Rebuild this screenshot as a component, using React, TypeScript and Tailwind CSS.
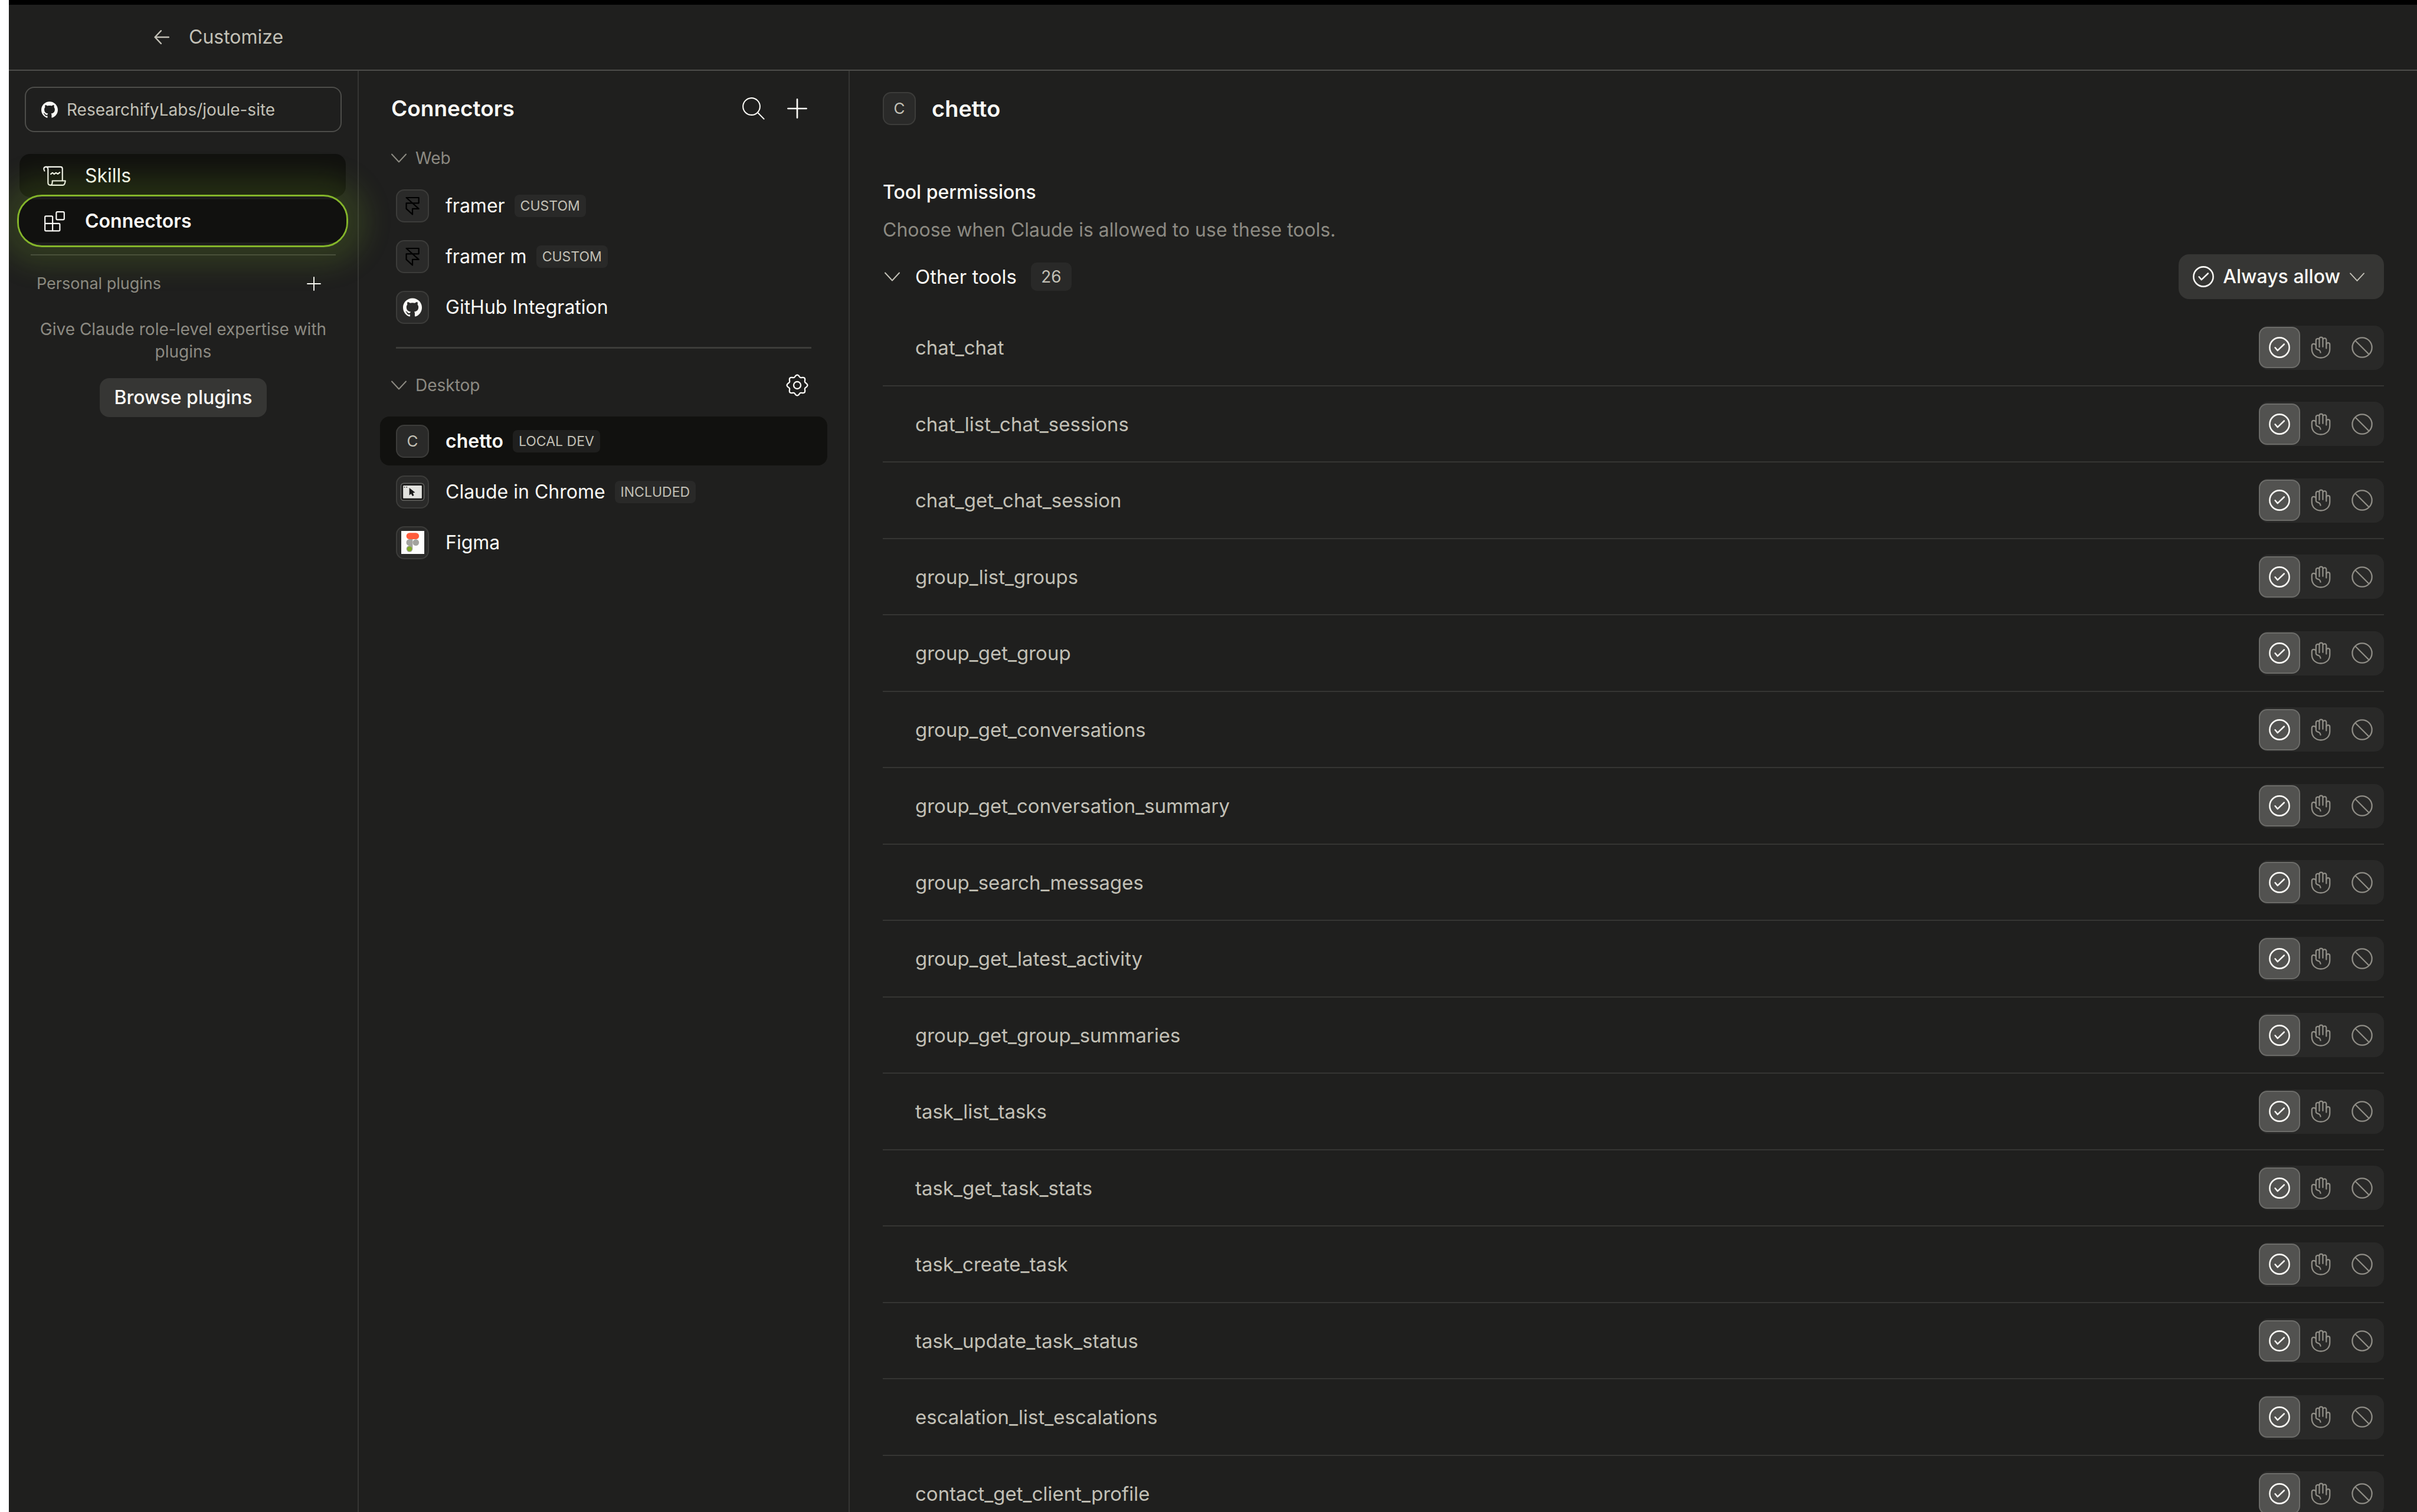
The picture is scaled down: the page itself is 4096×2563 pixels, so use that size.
import React, { useState } from 'react';

type IconProps = { className?: string };

const GITHUB_MARK =
  'M12 .297c-6.63 0-12 5.373-12 12 0 5.303 3.438 9.8 8.205 11.385.6.113.82-.258.82-.577 0-.285-.01-1.04-.015-2.04-3.338.724-4.042-1.61-4.042-1.61C4.422 18.07 3.633 17.7 3.633 17.7c-1.087-.744.084-.729.084-.729 1.205.084 1.838 1.236 1.838 1.236 1.07 1.835 2.809 1.305 3.495.998.108-.776.417-1.305.76-1.605-2.665-.3-5.466-1.332-5.466-5.93 0-1.31.465-2.38 1.235-3.22-.135-.303-.54-1.523.105-3.176 0 0 1.005-.322 3.3 1.23.96-.267 1.98-.399 3-.405 1.02.006 2.04.138 3 .405 2.28-1.552 3.285-1.23 3.285-1.23.645 1.653.24 2.873.12 3.176.765.84 1.23 1.91 1.23 3.22 0 4.61-2.805 5.625-5.475 5.92.42.36.81 1.096.81 2.22 0 1.606-.015 2.896-.015 3.286 0 .315.21.69.825.57C20.565 22.092 24 17.592 24 12.297c0-6.627-5.373-12-12-12';

function GithubIcon({ className }: IconProps) {
  return (
    <svg viewBox="0 0 24 24" fill="currentColor" className={className} aria-hidden="true">
      <path d={GITHUB_MARK} />
    </svg>
  );
}

function ArrowLeftIcon({ className }: IconProps) {
  return (
    <svg viewBox="0 0 24 24" fill="none" stroke="currentColor" strokeWidth="2.200" strokeLinecap="round" strokeLinejoin="round" className={className} aria-hidden="true">
      <path d="M23 12H1.5M11 2 1.5 12l9.500 10" />
    </svg>
  );
}

function PlusIcon({ className }: IconProps) {
  return (
    <svg viewBox="0 0 24 24" fill="none" stroke="currentColor" strokeWidth="1.900" strokeLinecap="round" className={className} aria-hidden="true">
      <path d="M12 1v22M1 12h22" />
    </svg>
  );
}

function SearchIcon({ className }: IconProps) {
  return (
    <svg viewBox="0 0 164 164" fill="none" stroke="currentColor" strokeWidth="9" strokeLinecap="round" className={className} aria-hidden="true">
      <circle cx="67" cy="67" r="62" />
      <path d="M113 112l45 46" />
    </svg>
  );
}

function ChevronDownIcon({ className }: IconProps) {
  return (
    <svg viewBox="0 0 26 16" fill="none" stroke="currentColor" strokeWidth="2" strokeLinecap="round" strokeLinejoin="round" className={className} aria-hidden="true">
      <path d="M1 1.500l12 13 12-13" />
    </svg>
  );
}

const gearOutline =
  'M' +
  Array.from({ length: 160 }, (_, i) => {
    const angle = (i / 160) * Math.PI * 2;
    const radius = 68 + 7 * Math.cos(8 * angle);
    return `${(82 + radius * Math.cos(angle)).toFixed(1)} ${(82 + radius * Math.sin(angle)).toFixed(1)}`;
  }).join('L') +
  'Z';

function GearIcon({ className }: IconProps) {
  return (
    <svg viewBox="0 0 164 164" fill="none" stroke="currentColor" strokeWidth="10" strokeLinejoin="round" className={className} aria-hidden="true">
      <path d={gearOutline} />
      <circle cx="82" cy="82" r="26" />
    </svg>
  );
}

function ScrollIcon({ className }: IconProps) {
  return (
    <svg viewBox="258 130 172 152" fill="none" stroke="currentColor" strokeWidth="9" strokeLinecap="round" strokeLinejoin="round" className={className} aria-hidden="true">
      <path d="M272 171C263 158 266 142 282 142H386Q400 142 400 156V240" />
      <path d="M282 142Q297 143 297 160V256Q297 273 314 273H402Q418 273 421 242H328Q330 272 314 273" />
      <path d="M317 194l12-10 12 10 13-10 13 9 14-11" />
    </svg>
  );
}

function BlocksIcon({ className }: IconProps) {
  return (
    <svg viewBox="266 461 154 150" fill="none" stroke="currentColor" strokeWidth="9" strokeLinejoin="round" className={className} aria-hidden="true">
      <path d="M282 500H322Q329 500 329 507V552H373Q380 552 380 559V597Q380 604 373 604H282Q275 604 275 597V507Q275 500 282 500Z" />
      <path d="M275 552H329V604" />
      <rect x="355" y="470" width="56" height="55" rx="8" />
    </svg>
  );
}

function FramerIcon({ className }: IconProps) {
  return (
    <svg viewBox="150 88 108 142" fill="none" stroke="#000" strokeWidth="10" strokeLinejoin="round" className={className} aria-hidden="true">
      <path d="M157 96H252V138H157V181L204 224V181H252Z" />
    </svg>
  );
}

function BrowserIcon({ className }: IconProps) {
  return (
    <svg viewBox="112 448 180 136" className={className} aria-hidden="true">
      <rect x="118" y="454" width="168" height="124" rx="20" fill="#1a1a19" stroke="#62625f" strokeWidth="7" />
      <rect x="134" y="469" width="136" height="94" rx="5" fill="#e2e2de" />
      <circle cx="144" cy="481" r="4.500" fill="#4a4a47" />
      <circle cx="160" cy="481" r="4.500" fill="#4a4a47" />
      <path d="M179 487V540L192 529 202 547 213 541 205 524 221 520Z" fill="#1a1a19" />
    </svg>
  );
}

function FigmaIcon({ className }: IconProps) {
  return (
    <svg viewBox="121 801 167 167" className={className} aria-hidden="true">
      <rect x="121" y="801" width="167" height="167" fill="#fdfdfc" />
      <path d="M181 861H204V931A23 23 0 1 1 181 908 23 23 0 0 1 181 861Z" fill="#a3a39f" />
      <circle cx="227" cy="885" r="23" fill="#a3a39f" />
      <rect x="158" y="815" width="92" height="46" rx="23" fill="#ff5c3c" />
      <circle cx="181" cy="931" r="18" fill="#83ab2b" />
    </svg>
  );
}

function CheckCircleIcon({ className }: IconProps) {
  return (
    <svg viewBox="0 0 156 156" fill="none" stroke="currentColor" strokeWidth="11" strokeLinecap="round" strokeLinejoin="round" className={className} aria-hidden="true">
      <circle cx="78" cy="78" r="72" />
      <path d="M46 79l18 21 48-46" />
    </svg>
  );
}

function HandIcon({ className }: IconProps) {
  return (
    <svg viewBox="0 0 156 176" fill="none" stroke="currentColor" strokeWidth="10" strokeLinecap="round" strokeLinejoin="round" className={className} aria-hidden="true">
      <path d="M42 72C36 58 11 55 11 76V100C11 140 40 165 78 165S145 140 145 100V66A13 13 0 0 0 119 66V95" />
      <path d="M119 66V35A13 13 0 0 0 93 30V83M93 30V25A13 13 0 0 0 67 25V85M67 30A13 13 0 0 0 42 35V92C44 106 58 101 68 110Q74 116 76 126" />
    </svg>
  );
}

function BanIcon({ className }: IconProps) {
  return (
    <svg viewBox="0 0 156 156" fill="none" stroke="currentColor" strokeWidth="10" className={className} aria-hidden="true">
      <circle cx="78" cy="78" r="72" />
      <path d="M27 27l102 102" />
    </svg>
  );
}

function Tile({ children }: { children: React.ReactNode }) {
  return (
    <span className="flex size-14 shrink-0 items-center justify-center rounded-[14px] border-2 border-[#3c3c3a] bg-[#2a2a29] text-[26px] text-[#c2c0b6]">
      {children}
    </span>
  );
}

type Connector = { name: string; tag?: string; icon: React.ReactNode };

const webConnectors: Connector[] = [
  { name: 'framer', tag: 'CUSTOM', icon: <FramerIcon className="h-8 w-6" /> },
  { name: 'framer m', tag: 'CUSTOM', icon: <FramerIcon className="h-8 w-6" /> },
  { name: 'GitHub Integration', icon: <GithubIcon className="size-8 text-[#faf9f5]" /> },
];

const desktopConnectors: Connector[] = [
  { name: 'chetto', tag: 'LOCAL DEV', icon: 'C' },
  { name: 'Claude in Chrome', tag: 'INCLUDED', icon: <BrowserIcon className="w-[42px]" /> },
  { name: 'Figma', icon: <FigmaIcon className="size-[39px]" /> },
];

const tools = [
  'chat_chat',
  'chat_list_chat_sessions',
  'chat_get_chat_session',
  'group_list_groups',
  'group_get_group',
  'group_get_conversations',
  'group_get_conversation_summary',
  'group_search_messages',
  'group_get_latest_activity',
  'group_get_group_summaries',
  'task_list_tasks',
  'task_get_task_stats',
  'task_create_task',
  'task_update_task_status',
  'escalation_list_escalations',
  'contact_get_client_profile',
];

function ConnectorList({ items, selected, onSelect }: { items: Connector[]; selected: string; onSelect: (name: string) => void }) {
  return (
    <ul className="flex flex-col gap-[3px] px-9">
      {items.map(({ name, tag, icon }) => {
        const active = name === selected;
        return (
          <li key={name}>
            <button
              type="button"
              onClick={() => onSelect(name)}
              className={`flex h-[83px] w-full items-center rounded-2xl px-[27px] text-[#faf9f5] ${active ? 'bg-[#11110f] font-semibold' : ''}`}
            >
              <Tile>
                <span className="font-normal">{icon}</span>
              </Tile>
              <span className="ml-7">{name}</span>
              {tag && (
                <span className={`ml-4 flex h-[38px] items-center rounded-lg px-[10px] text-[23px] font-normal text-[#c2c0b6] ${active ? 'bg-[#1f1f1e]' : 'bg-[#292928]'}`}>
                  {tag}
                </span>
              )}
            </button>
          </li>
        );
      })}
    </ul>
  );
}

const permissions = [
  { value: 'allow', label: 'Always allow', Icon: CheckCircleIcon, size: 'size-9' },
  { value: 'ask', label: 'Needs approval', Icon: HandIcon, size: 'h-10 w-9' },
  { value: 'block', label: 'Blocked', Icon: BanIcon, size: 'size-9' },
];

function PermissionToggle({ tool }: { tool: string }) {
  const [value, setValue] = useState('allow');
  return (
    <fieldset aria-label={tool} className="flex h-[75px] items-center rounded-2xl bg-[#292928] pr-[2px]">
      {permissions.map(({ value: option, label, Icon, size }) => (
        <label
          key={option}
          className={`relative flex size-[70px] items-center justify-center rounded-[14px] border-2 ${
            value === option ? 'border-[#6c6c69] bg-[#525250] text-[#faf9f5]' : 'border-transparent text-[#8f8d86]'
          }`}
        >
          <input type="radio" name={tool} value={option} aria-label={label} checked={value === option} onChange={() => setValue(option)} className="sr-only" />
          <Icon className={size} />
        </label>
      ))}
    </fieldset>
  );
}

export default function App() {
  const [selected, setSelected] = useState('chetto');

  return (
    <div className="h-screen overflow-hidden bg-white pl-[15px] font-['Inter',sans-serif] text-[32px] leading-[44px] text-[#faf9f5]">
      <div className="flex h-full flex-col overflow-hidden border-t-8 border-black bg-[#1f1f1e]">
        <header className="flex h-28 shrink-0 items-center border-b-2 border-[#4d4d4a] pl-[246px] text-[#c2c0b6]">
          <button type="button" aria-label="Back" className="mr-[33px]">
            <ArrowLeftIcon className="size-[26px]" />
          </button>
          <h1>Customize</h1>
        </header>

        <div className="flex min-h-0 flex-1">
          <aside className="flex w-[593px] shrink-0 flex-col border-r-2 border-[#353533] pt-[27px] text-[28px] leading-[38px]">
            <button type="button" className="mx-[27px] flex h-[77px] items-center rounded-2xl border-2 border-[#4d4d4a] pl-[26px] text-[#c2c0b6]">
              <GithubIcon className="mr-[15px] size-7 text-[#faf9f5]" />
              ResearchifyLabs/joule-site
            </button>

            <nav className="mt-[37px] flex flex-col gap-1 pr-5 pl-[18px] text-[32px]">
              <button type="button" className="flex h-[73px] items-center rounded-[18px] bg-[#11110f] pl-[39px]">
                <ScrollIcon className="mr-[31px] h-9 w-[41px]" />
                Skills
              </button>
              <button type="button" className="relative isolate flex h-[73px] items-center pl-[39px] font-semibold">
                <span className="absolute -inset-x-1 -inset-y-2 -z-10 flex overflow-hidden rounded-[42px] border-3 border-[#84b52a] bg-[#1e1e1d] py-[5px] shadow-[0_0_44px_32px_rgba(132,181,42,0.17)]">
                  <span className="flex-1 bg-[#11110f]" />
                </span>
                <BlocksIcon className="mr-[31px] h-9 w-[41px]" />
                Connectors
              </button>
            </nav>

            <hr className="mx-[37px] mt-5 border-t-2 border-[#41413e]" />

            <div className="mt-[29px] flex items-center justify-between pr-[62px] pl-[47px]">
              <h2 className="text-[27px] text-[#8c8a82]">Personal plugins</h2>
              <button type="button" aria-label="Add plugin">
                <PlusIcon className="size-6" />
              </button>
            </div>
            <p className="mt-[39px] px-12 text-center text-[#8c8a82]">Give Claude role-level expertise with plugins</p>
            <button type="button" className="mt-[26px] h-[66px] self-center rounded-2xl bg-[#363634] px-6 text-[32px] font-medium">
              Browse plugins
            </button>
          </aside>

          <section className="flex w-[832px] shrink-0 flex-col border-r-2 border-[#353533] pt-11">
            <div className="flex h-10 items-center pr-[68px] pl-[55px]">
              <h2 className="flex-1 text-[37px] font-semibold">Connectors</h2>
              <button type="button" aria-label="Search connectors" className="mr-9">
                <SearchIcon className="size-[38px]" />
              </button>
              <button type="button" aria-label="Add connector">
                <PlusIcon className="size-[38px] p-[2px]" />
              </button>
            </div>

            <button type="button" className="mt-[45px] flex items-center gap-[15px] pl-[55px] text-[28px] leading-[38px] text-[#8c8a82]">
              <ChevronDownIcon className="w-[26px]" />
              Web
            </button>
            <div className="mt-5">
              <ConnectorList items={webConnectors} selected={selected} onSelect={setSelected} />
            </div>

            <hr className="mx-[63px] mt-[26px] border-t-3 border-[#3c3c3a]" />

            <div className="mt-[43px] flex items-center justify-between pr-[68px] pl-[55px]">
              <button type="button" className="flex items-center gap-[15px] text-[28px] leading-[38px] text-[#8c8a82]">
                <ChevronDownIcon className="w-[26px]" />
                Desktop
              </button>
              <button type="button" aria-label="Desktop settings">
                <GearIcon className="size-[38px]" />
              </button>
            </div>
            <div className="mt-[34px]">
              <ConnectorList items={desktopConnectors} selected={selected} onSelect={setSelected} />
            </div>
          </section>

          <main className="min-w-0 flex-1 px-14 pt-9">
            <div className="flex items-center gap-[27px]">
              <Tile>C</Tile>
              <h2 className="text-[38px] font-semibold">chetto</h2>
            </div>

            <h3 className="mt-[92px] font-medium">Tool permissions</h3>
            <p className="mt-5 text-[#8c8a82]">Choose when Claude is allowed to use these tools.</p>

            <div className="mt-[19px] flex items-center justify-between">
              <button type="button" className="flex items-center pl-[3px] text-[33px]">
                <ChevronDownIcon className="mr-[26px] w-[26px] text-[#c2c0b6]" />
                Other tools
                <span className="ml-6 flex h-12 w-[69px] items-center justify-center rounded-[10px] bg-[#292928] text-[28px] text-[#c2c0b6]">26</span>
              </button>
              <div className="relative">
                <CheckCircleIcon className="pointer-events-none absolute top-5 left-6 size-9" />
                <select
                  aria-label="Permission for all other tools"
                  defaultValue="Always allow"
                  className="block h-[76px] appearance-none rounded-[18px] bg-[#363634] pr-[74px] pl-[75px] font-medium field-sizing-content"
                >
                  <option>Always allow</option>
                  <option>Needs approval</option>
                  <option>Blocked</option>
                </select>
                <ChevronDownIcon className="pointer-events-none absolute top-[31px] right-[33px] w-[25px] text-[#c2c0b6]" />
              </div>
            </div>

            <ul className="mt-[18px]">
              {tools.map((tool) => (
                <li key={tool} className="flex h-[130px] items-center justify-between border-b-2 border-[#353533] pl-[55px] even:h-[129px]">
                  <span className="text-[33px] text-[#c2c0b6]">{tool}</span>
                  <PermissionToggle tool={tool} />
                </li>
              ))}
            </ul>
          </main>
        </div>
      </div>
    </div>
  );
}
